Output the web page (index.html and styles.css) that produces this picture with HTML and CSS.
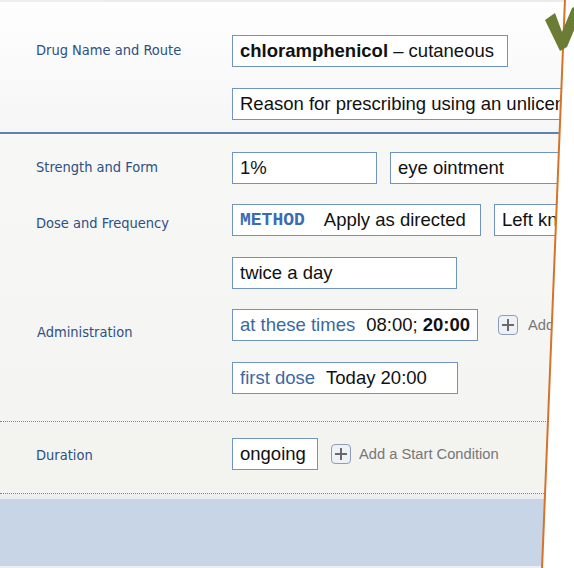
FILE: index.html
```html
<!DOCTYPE html>
<html lang="en">
<head>
<meta charset="UTF-8">
<meta name="viewport" content="width=device-width, initial-scale=1.0">
<title>Prescription</title>
<link rel="stylesheet" href="styles.css">
</head>
<body>

<div class="page">
  <div class="top-rule"></div>

  <section class="panel panel-drug">
    <div class="group">
      <div class="label">Drug Name and Route</div>
      <div class="stack">
        <div class="box w-drug"><b>chloramphenicol</b>&nbsp;– cutaneous</div>
        <div class="box w-reason">Reason for prescribing using an unlicensed product</div>
      </div>
    </div>
  </section>

  <section class="panel panel-dose">
    <div class="group">
      <div class="label">Strength and Form</div>
      <div class="line">
        <div class="box w-strength">1%</div>
        <div class="box w-form">eye ointment</div>
      </div>
    </div>

    <div class="group">
      <div class="label label-dose">Dose and Frequency</div>
      <div class="stack">
        <div class="line">
          <div class="box w-method"><span class="method">METHOD</span>Apply as directed</div>
          <div class="box w-site">Left knee</div>
        </div>
        <div class="box w-freq">twice a day</div>
      </div>
    </div>

    <div class="group">
      <div class="label label-admin">Administration</div>
      <div class="stack">
        <div class="line line-wide">
          <div class="box w-times"><span class="tag">at these times</span>08:00;&nbsp;<b>20:00</b></div>
          <div class="add add-wide"><span class="plus"></span>Add a Stop Condition</div>
        </div>
        <div class="box w-first"><span class="tag">first dose</span>Today 20:00</div>
      </div>
    </div>
  </section>

  <section class="panel panel-duration">
    <div class="group">
      <div class="label label-duration">Duration</div>
      <div class="line">
        <div class="box w-ongoing">ongoing</div>
        <div class="add"><span class="plus"></span>Add a Start Condition</div>
      </div>
    </div>
  </section>

  <div class="band"></div>

  <!-- page edge and tick lying over the form -->
  <svg class="overlay" width="574" height="568" viewBox="0 0 574 568">
    <polygon points="565,0 580,0 580,568 542,568" fill="#ffffff"/>
    <line x1="565" y1="-1" x2="542" y2="569" stroke="#d6732a" stroke-width="2"/>
    <path d="M545,20 L555,13 L562,32 L572,8 L580,4 L580,16 L567,47 L560,51 Z" fill="#6b7c34"/>
  </svg>
</div>

</body>
</html>
```

FILE: styles.css
```css
body {
  margin: 0;
  background-color: #fff;
  font-family: "Liberation Sans", Arial, sans-serif;
}
.page {
  position: relative;
  width: 574px;
  height: 568px;
  overflow: hidden;
  background-color: #eceef0;
}
.top-rule {
  height: 2px;
  margin-left: 104px;
  background-color: #ebebeb;
}
.panel {
  display: flex;
  flex-direction: column;
  gap: 20px;
}
.panel-drug {
  padding: 33px 0 12px;
  background: linear-gradient(#fefefe, #f6f6f6);
  border-bottom: 2px solid #5f82b2;
}
.panel-dose {
  padding: 18px 0 27px;
  background: linear-gradient(#f7f7f6, #f4f4f2);
  border-bottom: 1px dotted #5f88c0;
}
.panel-duration {
  padding: 16px 0 23px;
  background-color: #f3f3f0;
  border-bottom: 1px dotted #5f88c0;
}
.group {
  display: grid;
  grid-template-columns: 232px 1fr;
  align-items: start;
}
.label {
  padding-left: 36px;
  font-family: "DejaVu Sans Condensed", "DejaVu Sans", Verdana, sans-serif;
  font-size: 14.5px;
  line-height: 30px;
  color: #2d5083;
  white-space: nowrap;
}
.label-dose {
  padding-top: 4px;
}
.label-admin {
  padding-top: 8px;
  padding-left: 37px;
}
.label-duration {
  padding-top: 2px;
}
.stack {
  display: flex;
  flex-direction: column;
  gap: 21px;
}
.line {
  display: flex;
  align-items: center;
  gap: 13px;
}
.line-wide {
  gap: 20px;
}
.box {
  box-sizing: border-box;
  height: 32px;
  display: flex;
  align-items: center;
  flex-shrink: 0;
  padding: 0 7px;
  background-color: #fff;
  border: 1px solid #7193c2;
  font-size: 18.5px;
  color: #111;
  white-space: nowrap;
  overflow: hidden;
}
.box b {
  font-weight: bold;
}
.w-drug { width: 276px; }
.w-reason { width: 340px; }
.w-strength { width: 145px; }
.w-form { width: 200px; }
.w-method { width: 249px; }
.w-site { width: 120px; }
.w-freq { width: 225px; }
.w-times { width: 246px; }
.w-first { width: 226px; }
.w-ongoing { width: 86px; }
.method {
  font-family: "Liberation Mono", "Courier New", monospace;
  font-weight: bold;
  font-size: 18px;
  color: #3b6cb3;
  margin-right: 19px;
}
.tag {
  color: #3c68a3;
  margin-right: 11px;
}
.add {
  display: flex;
  align-items: center;
  gap: 8px;
  font-size: 14.7px;
  color: #777;
  white-space: nowrap;
  flex-shrink: 0;
}
.add-wide {
  gap: 10px;
}
.plus {
  position: relative;
  box-sizing: border-box;
  width: 20px;
  height: 20px;
  border: 1px solid #8c9db6;
  border-radius: 4px;
  background-color: #eef1f5;
}
.plus::before,
.plus::after {
  content: "";
  position: absolute;
  background-color: #6a6a6a;
}
.plus::before {
  left: 3px;
  top: 8px;
  width: 12px;
  height: 2px;
}
.plus::after {
  left: 8px;
  top: 3px;
  width: 2px;
  height: 12px;
}
.band {
  height: 67px;
  margin-top: 5px;
  background-color: #c8d5e6;
}
.overlay {
  position: absolute;
  left: 0;
  top: 0;
  pointer-events: none;
}
```
